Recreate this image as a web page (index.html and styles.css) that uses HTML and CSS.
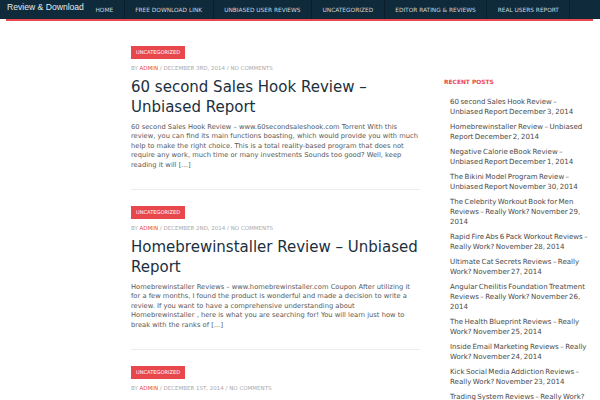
FILE: index.html
```html
<!DOCTYPE html>
<html>
<head>
<meta charset="utf-8">
<title>Review &amp; Download</title>
<link rel="stylesheet" href="styles.css">
</head>
<body>
<header class="topbar">
  <div class="topbar-inner">
    <a class="logo" href="#">Review &amp; Download</a>
    <nav class="menu">
      <a href="#">Home</a>
      <a href="#">Free Download Link</a>
      <a href="#">Unbiased User Reviews</a>
      <a href="#">Uncategorized</a>
      <a href="#">Editor Rating &amp; Reviews</a>
      <a href="#">Real Users Report</a>
    </nav>
  </div>
</header>
<div class="accent"></div>
<div class="content">
  <main class="posts">
    <article class="post">
      <span class="badge">Uncategorized</span>
      <div class="meta">By <span class="author">admin</span> / December 3rd, 2014 / No Comments</div>
      <h2 class="title">60 second Sales Hook Review – Unbiased Report</h2>
      <p class="excerpt">60 second Sales Hook Review – www.60secondsaleshook.com Torrent With this review, you can find its main functions boasting, which would provide you with much help to make the right choice. This is a total reality-based program that does not require any work, much time or many investments Sounds too good? Well, keep reading it will […]</p>
    </article>
    <article class="post">
      <span class="badge">Uncategorized</span>
      <div class="meta">By <span class="author">admin</span> / December 2nd, 2014 / No Comments</div>
      <h2 class="title">Homebrewinstaller Review – Unbiased Report</h2>
      <p class="excerpt">Homebrewinstaller Reviews – www.homebrewinstaller.com Coupon After utilizing it for a few months, I found the product is wonderful and made a decision to write a review. If you want to have a comprehensive understanding about Homebrewinstaller , here is what you are searching for! You will learn just how to break with the ranks of […]</p>
    </article>
    <article class="post">
      <span class="badge">Uncategorized</span>
      <div class="meta">By <span class="author">admin</span> / December 1st, 2014 / No Comments</div>
      <h2 class="title">Negative Calorie eBook Review – Unbiased Report</h2>
    </article>
  </main>
  <aside class="sidebar">
    <h3 class="widget-title">Recent Posts</h3>
    <ul class="recent">
      <li><a href="#">60 second Sales Hook Review – Unbiased Report December 3, 2014</a></li>
      <li><a href="#">Homebrewinstaller Review – Unbiased Report December 2, 2014</a></li>
      <li><a href="#">Negative Calorie eBook Review – Unbiased Report December 1, 2014</a></li>
      <li><a href="#">The Bikini Model Program Review – Unbiased Report November 30, 2014</a></li>
      <li><a href="#">The Celebrity Workout Book for Men Reviews – Really Work? November 29, 2014</a></li>
      <li><a href="#">Rapid Fire Abs 6 Pack Workout Reviews – Really Work? November 28, 2014</a></li>
      <li><a href="#">Ultimate Cat Secrets Reviews – Really Work? November 27, 2014</a></li>
      <li><a href="#">Angular Cheilitis Foundation Treatment Reviews – Really Work? November 26, 2014</a></li>
      <li><a href="#">The Health Blueprint Reviews – Really Work? November 25, 2014</a></li>
      <li><a href="#">Inside Email Marketing Reviews – Really Work? November 24, 2014</a></li>
      <li><a href="#">Kick Social Media Addiction Reviews – Really Work? November 23, 2014</a></li>
      <li><a href="#">Trading System Reviews – Really Work? November 22, 2014</a></li>
    </ul>
  </aside>
</div>
</body>
</html>
```
FILE: styles.css
```css
html, body {
  margin: 0;
  padding: 0;
  background: #ffffff;
}
body {
  font-family: "DejaVu Sans", "Liberation Sans", sans-serif;
  overflow: hidden;
  width: 600px;
  height: 400px;
}
a {
  text-decoration: none;
  color: inherit;
}
.topbar {
  background: #0f2a3b;
  height: 19px;
}
.topbar-inner {
  display: flex;
  align-items: stretch;
  height: 19px;
  padding-left: 7px;
}
.logo {
  font-family: "Liberation Sans", "DejaVu Sans", sans-serif;
  color: #e3e9ed;
  font-size: 8.6px;
  line-height: 11px;
  padding-top: 2px;
  padding-right: 1px;
  white-space: nowrap;
}
.menu {
  display: flex;
  align-items: stretch;
}
.menu a {
  display: block;
  color: #ccd5dc;
  font-size: 5.85px;
  line-height: 20px;
  text-transform: uppercase;
  padding: 0 10.5px;
  border-right: 1px solid #0a1e2b;
  white-space: nowrap;
}
.accent {
  height: 2px;
  background: #e9474f;
  margin: 0 7px 0 6px;
}
.content {
  display: grid;
  grid-template-columns: 289px 148px;
  column-gap: 24px;
  padding: 25px 7px 0 131px;
}
.post {
  padding-bottom: 19px;
  border-bottom: 1px solid #ececec;
  margin-bottom: 16px;
}
.badge {
  display: block;
  width: fit-content;
  background: #e8474c;
  color: #ffffff;
  font-size: 5.1px;
  line-height: 13px;
  height: 13px;
  padding: 0 5px;
  text-transform: uppercase;
}
.meta {
  margin-top: 5px;
  font-size: 5.5px;
  line-height: 8px;
  color: #aaaaaa;
  text-transform: uppercase;
  white-space: nowrap;
}
.author {
  color: #e8474c;
}
.title {
  margin: 5px 0 0;
  font-size: 15px;
  font-weight: normal;
  line-height: 20px;
  color: #1b2f3d;
}
.excerpt {
  margin: 6px 0 0;
  font-size: 6.74px;
  line-height: 9.4px;
  color: #585858;
}
.sidebar {
  padding-top: 32px;
}
.widget-title {
  margin: 0;
  font-size: 5.9px;
  line-height: 8px;
  font-weight: bold;
  color: #e8474c;
  text-transform: uppercase;
}
.recent {
  list-style: none;
  margin: 11px 0 0;
  padding: 0 1px 0 6px;
}
.recent li {
  font-size: 7.05px;
  word-spacing: -0.8px;
  line-height: 10px;
  color: #4a4a4a;
  margin-bottom: 5px;
}
```
